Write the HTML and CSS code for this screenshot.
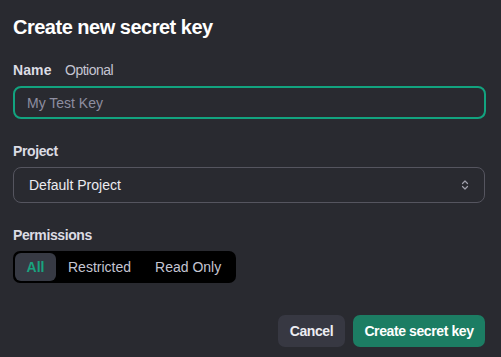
FILE: index.html
```html
<!DOCTYPE html>
<html lang="en">
  <head>
    <meta charset="UTF-8" />
    <title>Create new secret key</title>
    <link rel="stylesheet" href="styles.css">
  </head>
  <body>
    <div class="dialog">
      <h1>Create new secret key</h1>

      <div class="field">
        <label class="label" for="key-name"><span class="name">Name</span><span class="optional">Optional</span></label>
        <input id="key-name" class="text-input" type="text" placeholder="My Test Key" />
      </div>

      <div class="field">
        <label class="label">Project</label>
        <div class="select">
          <span>Default Project</span>
          <svg class="chevron" width="8" height="10" viewBox="0 0 8 10" fill="none" stroke="currentColor" stroke-width="1.2" stroke-linecap="round" stroke-linejoin="round">
            <path d="M1.5 3.5 L4 1 L6.5 3.5" />
            <path d="M1.5 6.5 L4 9 L6.5 6.5" />
          </svg>
        </div>
      </div>

      <div class="field">
        <label class="label">Permissions</label>
        <div class="segmented">
          <button class="seg active">All</button>
          <button class="seg">Restricted</button>
          <button class="seg">Read Only</button>
        </div>
      </div>

      <div class="actions">
        <button class="btn btn-cancel">Cancel</button>
        <button class="btn btn-primary">Create secret key</button>
      </div>
    </div>
  </body>
</html>
```

FILE: styles.css
```css
body {
  margin: 0;
  background: #292a30;
  font-family: "Liberation Sans", Arial, sans-serif;
  color: #ececf1;
}

.dialog {
  padding: 15px 15px 10px 13px;
}

h1 {
  margin: 0 0 23px;
  font-size: 20px;
  font-weight: bold;
  line-height: 24px;
  letter-spacing: -0.5px;
  color: #fff;
}

.field {
  margin-bottom: 24px;
}

.label {
  display: block;
  font-size: 14px;
  font-weight: bold;
  line-height: 16px;
  letter-spacing: -0.4px;
  margin-bottom: 8px;
  color: #dcdce4;
}

.name {
  display: inline-block;
  width: 52px;
  letter-spacing: 0.1px;
}

.optional {
  font-weight: normal;
  letter-spacing: -0.5px;
  color: #c5c5d2;
}

.text-input {
  box-sizing: border-box;
  width: 100%;
  height: 33px;
  padding: 0 12px;
  border: 2px solid #12a37f;
  border-radius: 8px;
  background: #292a30;
  color: #ececf1;
  font-family: inherit;
  font-size: 14px;
  outline: none;
}

.text-input::placeholder {
  color: #8e8ea0;
}

.select {
  box-sizing: border-box;
  width: 472px;
  height: 36px;
  display: flex;
  align-items: center;
  justify-content: space-between;
  padding: 0 15px 0 15px;
  border: 1px solid #55555f;
  border-radius: 8px;
  font-size: 14px;
  color: #ececf1;
}

.chevron {
  color: #a0a0ab;
}

.segmented {
  display: inline-flex;
  padding: 2px 3px 2px 2px;
  background: #000;
  border-radius: 7px;
}

.seg {
  height: 28px;
  padding: 0 12px;
  border: none;
  border-radius: 6px;
  background: transparent;
  font-family: inherit;
  font-size: 14px;
  color: #c5c5d2;
}

.seg.active {
  width: 41px;
  padding: 0;
  background: #373a44;
  color: #19a37f;
  font-weight: bold;
}

.actions {
  display: flex;
  justify-content: flex-end;
  gap: 8px;
  margin-top: 32px;
  padding-right: 1px;
}

.btn {
  height: 32px;
  border: none;
  border-radius: 7px;
  font-family: inherit;
  font-size: 14px;
  font-weight: bold;
  letter-spacing: -0.4px;
  white-space: nowrap;
  color: #fff;
  padding: 0;
}

.btn-cancel {
  width: 67px;
  background: #373842;
  color: #ececf1;
}

.btn-primary {
  width: 132px;
  background: #1c7d63;
}
```
